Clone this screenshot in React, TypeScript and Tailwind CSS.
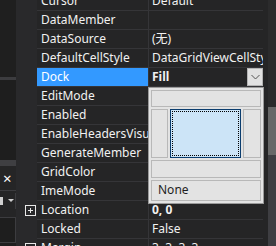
import React from 'react';

interface Prop {
  name: string;
  value: string;
  bold?: boolean;
  expandable?: boolean;
  selected?: boolean;
}

// values of the rows covered by the dock picker are left empty
const props: Prop[] = [
  { name: 'Cursor', value: 'Default' },
  { name: 'DataMember', value: '' },
  { name: 'DataSource', value: '(无)' },
  { name: 'DefaultCellStyle', value: 'DataGridViewCellStyle { BackColor=Color [Window] }' },
  { name: 'Dock', value: 'Fill', bold: true, selected: true },
  { name: 'EditMode', value: '' },
  { name: 'Enabled', value: '' },
  { name: 'EnableHeadersVisualStyles', value: '' },
  { name: 'GenerateMember', value: '' },
  { name: 'GridColor', value: '' },
  { name: 'ImeMode', value: '' },
  { name: 'Location', value: '0, 0', bold: true, expandable: true },
  { name: 'Locked', value: 'False' },
  { name: 'Margin', value: '3, 3, 3, 3', expandable: true },
];

// small boxed plus used for expandable properties
const PlusBox = () => (
  <svg width="11" height="11" viewBox="0 0 11 11" className="block">
    <rect x="0.5" y="0.5" width="10" height="10" fill="none" stroke="#e8e8e8" />
    <path d="M3 5.5h5M5.5 3v5" stroke="#e8e8e8" />
  </svg>
);

const Row = ({ p }: { p: Prop }) => (
  <div className="flex h-[19px]">
    <div className="w-[21px] shrink-0 flex items-center pl-[9px] pt-[1px] bg-[#29292b]">
      {p.expandable && <PlusBox />}
    </div>
    <div className="flex flex-1 border-t border-[#353538] min-w-0">
      <div
        className={
          'w-[112px] shrink-0 border-r border-[#353538] pl-[4px] flex items-center overflow-hidden whitespace-nowrap ' +
          (p.selected ? 'bg-[#3399ff] text-white' : 'text-[#f1f1f1]')
        }
      >
        {p.name}
      </div>
      <div
        className={
          'flex-1 pl-[3px] flex items-center overflow-hidden whitespace-nowrap text-[#f1f1f1] relative ' +
          (p.bold ? 'font-bold' : '')
        }
      >
        {p.value}
        {p.selected && (
          <div className="absolute right-0 top-0 w-[16px] h-[18px] bg-[#e1e1e1] border border-[#b4b4b4] flex items-center justify-center">
            <svg width="9" height="6" viewBox="0 0 9 6">
              <path d="M0.5 1l4 4 4-4" fill="none" stroke="#555" />
            </svg>
          </div>
        )}
      </div>
    </div>
  </div>
);

const DockPicker = () => (
  <div className="absolute left-[148px] top-[87px] w-[116px] h-[117px] bg-[#e3e3e3] border border-[#9a9a9a] p-[2px] flex flex-col gap-[2px]">
    <div className="h-[18px] border border-[#b8b8b8] bg-[#e3e3e3]" />
    <div className="flex gap-[2px] h-[51px]">
      <div className="w-[17px] border border-[#b8b8b8]" />
      <div className="flex-1 bg-[#cce4f7] border border-[#0b3d6e] p-[1px]">
        <div className="w-full h-full border border-dotted border-black" />
      </div>
      <div className="w-[18px] border border-[#b8b8b8]" />
    </div>
    <div className="h-[18px] border border-[#b8b8b8]" />
    <div className="h-[22px] border border-[#b8b8b8] pl-[6px] flex items-center text-[#1e1e1e]">None</div>
  </div>
);

export default function App() {
  return (
    <div
      className="w-[276px] h-[246px] overflow-hidden flex bg-[#252526] text-[12px] relative"
      style={{ fontFamily: '"Noto Sans", "Noto Sans CJK SC", sans-serif' }}
    >
      {/* left docked panel */}
      <div className="w-[16px] shrink-0 flex flex-col bg-[#1e1e1e]">
        <div className="h-[77px] bg-[#1f1f1f]" />
        <div className="h-[3px] bg-[#3c3c3f]" />
        <div className="h-[80px] bg-[#1e1e1e]" />
        <div className="h-[6px] bg-[#3f3f42]" />
        <div className="h-[24px] bg-[#252526] flex items-center pl-[3px] text-white text-[15px] leading-none">
          ×
        </div>
        <div className="h-[1px] bg-[#3c3c3f]" />
        <div className="h-[20px] bg-[#252526] flex items-center">
          <div className="w-[3px] h-[8px] bg-[#d0d0d0]" />
          <svg width="6" height="4" viewBox="0 0 6 4" className="ml-[5px]">
            <path d="M0 0h6L3 3z" fill="#d0d0d0" />
          </svg>
          <div className="ml-[1px] w-[1px] h-[16px] bg-[#3c3c3f]" />
        </div>
        <div className="h-[6px] bg-[#252526]" />
        <div className="h-[26px] border border-[#3c3c3f] border-l-0 bg-[#1e1e1e]" />
      </div>

      {/* property grid */}
      <div className="flex-1 flex flex-col bg-[#252526] -mt-[9px] min-w-0">
        {props.map((p) => (
          <Row key={p.name} p={p} />
        ))}
      </div>

      {/* scrollbar */}
      <div className="w-[13px] shrink-0 flex">
        <div className="w-[5px] bg-[#252526]" />
        <div className="flex-1 flex flex-col">
          <div className="h-[107px] bg-[#2b2b2c]" />
          <div className="h-[48px] bg-[#686868]" />
          <div className="flex-1 bg-[#3e3e42]" />
        </div>
      </div>

      <DockPicker />
    </div>
  );
}
